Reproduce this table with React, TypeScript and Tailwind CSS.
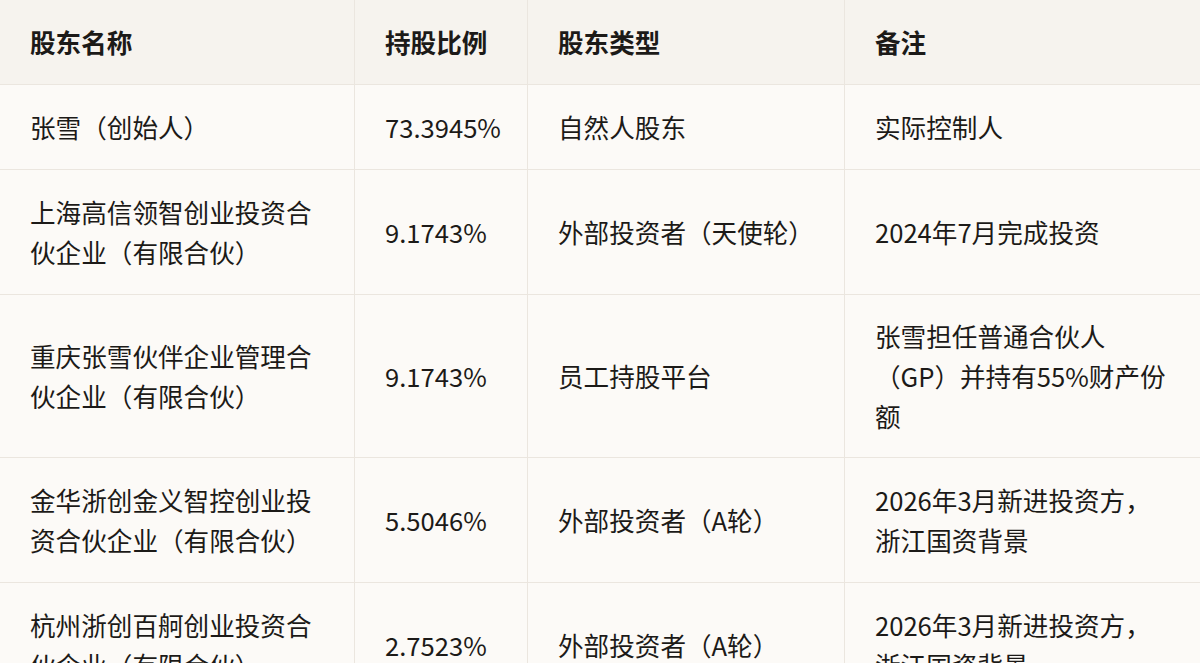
import React from "react";

type Row = {
  name: string[];
  ratio: string;
  kind: string;
  note: string[];
  h: string;
};

const rows: Row[] = [
  { name: ["张雪（创始人）"], ratio: "73.3945%", kind: "自然人股东", note: ["实际控制人"], h: "h-[85px]" },
  {
    name: ["上海高信领智创业投资合", "伙企业（有限合伙）"],
    ratio: "9.1743%",
    kind: "外部投资者（天使轮）",
    note: ["2024年7月完成投资"],
    h: "h-[125px]",
  },
  {
    name: ["重庆张雪伙伴企业管理合", "伙企业（有限合伙）"],
    ratio: "9.1743%",
    kind: "员工持股平台",
    note: ["张雪担任普通合伙人", "（GP）并持有55%财产份", "额"],
    h: "h-[163px]",
  },
  {
    name: ["金华浙创金义智控创业投", "资合伙企业（有限合伙）"],
    ratio: "5.5046%",
    kind: "外部投资者（A轮）",
    note: ["2026年3月新进投资方，", "浙江国资背景"],
    h: "h-[125px]",
  },
  {
    name: ["杭州浙创百舸创业投资合", "伙企业（有限合伙）"],
    ratio: "2.7523%",
    kind: "外部投资者（A轮）",
    note: ["2026年3月新进投资方，", "浙江国资背景"],
    h: "h-[125px]",
  },
];

const cols = "grid grid-cols-[355px_173px_317px_355px]";

const Cell = ({ lines, last }: { lines: string[]; last?: boolean }) => (
  <div
    className={`flex flex-col justify-center pl-[30px] pr-4 ${
      last ? "" : "border-r border-[#ebe6df]"
    }`}
  >
    {lines.map((l, i) => (
      <span key={i} className="block whitespace-nowrap">
        {l}
      </span>
    ))}
  </div>
);

export default function App() {
  return (
    <div
      className="w-[1200px] h-[663px] overflow-hidden bg-[#fcfaf7] text-[#1c1a18] text-[25.6px] leading-[40px]"
      style={{ fontFamily: '"Noto Sans CJK SC", "Noto Sans", sans-serif' }}
    >
      <div className={`${cols} h-[85px] bg-[#f6f3ee] border-b border-[#ebe6df] font-bold`}>
        <Cell lines={["股东名称"]} />
        <Cell lines={["持股比例"]} />
        <Cell lines={["股东类型"]} />
        <Cell lines={["备注"]} last />
      </div>
      {rows.map((r, i) => (
        <div key={i} className={`${cols} ${r.h} border-b border-[#ebe6df]`}>
          <Cell lines={r.name} />
          <Cell lines={[r.ratio]} />
          <Cell lines={[r.kind]} />
          <Cell lines={r.note} last />
        </div>
      ))}
    </div>
  );
}
